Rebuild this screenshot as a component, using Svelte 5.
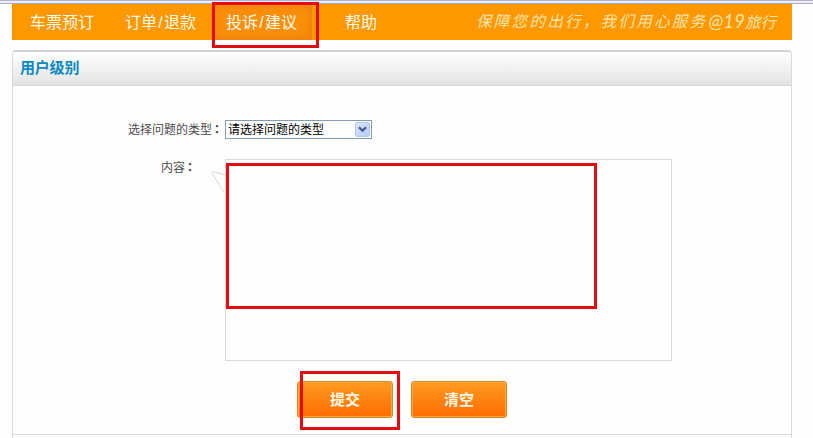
<script>
  const nav = [['车票预订'], ['订单', '退款'], ['投诉', '建议'], ['帮助']];
  const active = 2;
</script>

<div class="page">
  <div class="rule"></div>
  <nav>
    {#each nav as words, i}
      <a class="n{i}" class:active={i === active}>{words[0]}{#if words[1]}<span class="slash">/</span>{words[1]}{/if}{#if i === active}<i class="mark"></i>{/if}</a>
    {/each}
    <div class="slogan"><span>保障您的出行，我们用心服务</span><span class="brand"><b>@19</b>旅行</span></div>
  </nav>

  <section>
    <header>用户级别</header>
    <div class="body">
      <div class="row type">
        <label for="kind">选择问题的类型<span class="colon">：</span></label>
        <div class="select" id="kind">
          <span>请选择问题的类型</span>
          <div class="arrow">
            <svg width="9" height="7" viewBox="0 0 9 7"><path d="M1 1.2 4.5 4.7 8 1.2" fill="none" stroke="#44598c" stroke-width="2.3" /></svg>
          </div>
        </div>
      </div>
      <div class="row content">
        <label for="text">内容<span class="colon">：</span></label>
        <div class="area" id="text">
          <svg class="tail" width="16" height="26" viewBox="0 0 16 26"><path d="M15 5.5 1.5 1.5Q.3 2 1 3.5L13 22" fill="none" stroke="#d6d6d6" /></svg>
          <i class="mark"></i>
        </div>
      </div>
      <div class="buttons">
        <div class="btn">提交<i class="mark"></i></div>
        <div class="btn">清空</div>
      </div>
    </div>
  </section>
</div>

<style>
  :global(body) { background: #fff; }
  .page {
    width: 813px; height: 438px; overflow: hidden; box-sizing: border-box;
    display: flex; flex-direction: column; background: #fefefe;
    font-family: "Liberation Sans", "Noto Sans CJK SC", sans-serif;
    font-size: 12px; color: #4c4c4c;
  }
  .rule { height: 4px; flex: none; background: linear-gradient(#b3b2ca 0 1px, #eeeef8 1px 3px, #a8a9c6 3px); }
  nav { height: 36px; flex: none; margin: 0 21px 0 12px; display: flex; background: #fd9800; color: #fffaf0; font-size: 16px; line-height: 38px; }
  nav a { position: relative; box-sizing: border-box; white-space: nowrap; }
  .slash { display: inline-block; width: 7px; text-align: center; }
  .n0 { width: 97px; padding-left: 18px; }
  .n1 { width: 103px; padding-left: 16px; }
  .n2 { width: 100px; padding-left: 14px; }
  .n3 { width: 121px; padding-left: 33px; }
  .active { background: #fb8f0a; box-shadow: inset 0 0 10px 1px #e77d10; }
  .mark { position: absolute; box-sizing: border-box; border: 3px solid #e60b10; }
  nav .mark { left: 0; top: -2px; width: 107px; height: 46px; z-index: 1; }
  .slogan {
    margin-left: 43px; display: flex; gap: 1px; line-height: 33px; white-space: nowrap;
    font-family: "Noto Sans CJK SC", sans-serif; font-size: 15.5px; font-weight: 400; font-style: italic; letter-spacing: 2.3px; color: #ffe3ae;
  }
  .brand { letter-spacing: 0; }
  .brand b { font-family: Lato, sans-serif; font-weight: 400; font-size: 19px; }
  section { margin: 10px 21px 0 12px; flex: 1; box-sizing: border-box; border: 1px solid #d9d9d9; border-top: 2px solid #d2d2d2; border-bottom: 0; border-radius: 4px 4px 0 0; display: flex; flex-direction: column; }
  header { height: 34px; flex: none; box-sizing: border-box; border-bottom: 1px solid #d9d9d9; background: linear-gradient(#fff, #e3e3e3); padding-left: 7px; line-height: 31px; font-size: 15px; font-weight: bold; color: #0c88c2; border-radius: 3px 3px 0 0; letter-spacing: -.2px; }
  .body { height: 349px; flex: none; box-sizing: border-box; padding-top: 34px; border-bottom: 1px solid #d9d9d9; }
  .row { display: flex; }
  label { box-sizing: border-box; width: 212px; flex: none; white-space: nowrap; line-height: 17px; }
  .type label { padding-left: 115px; }
  .content label { padding-left: 148px; line-height: 16px; }
  .colon { font-family: "Noto Sans CJK TC", sans-serif; font-weight: bold; margin-left: -1px; }
  .select { width: 147px; height: 19px; box-sizing: border-box; border: 1px solid #7f9db9; background: #fff; color: #000; display: flex; justify-content: space-between; padding: 1px 1px 1px 2px; line-height: 16px; }
  .arrow { width: 15px; height: 15px; box-sizing: border-box; border-radius: 2px; border: 1px solid #b4c8f6; background: linear-gradient(135deg, #dce7ff, #b4caf8); display: flex; align-items: center; justify-content: center; }
  .content { margin-top: 20px; }
  .area { position: relative; width: 447px; height: 202px; box-sizing: border-box; border: 1px solid #d9d9d9; }
  .tail { position: absolute; left: -15px; top: 10px; }
  .area .mark { left: 0; top: 3px; width: 371px; height: 146px; }
  .buttons { display: flex; gap: 18px; margin: 20px 0 0 284px; }
  .btn { position: relative; width: 96px; height: 37px; box-sizing: border-box; border: 1px solid #d98a22; border-radius: 3px; background: linear-gradient(#ff9a22, #ff6c00); box-shadow: inset 0 0 0 1px #ffa43c; color: #fff8e6; font-size: 15px; font-weight: bold; line-height: 35px; text-align: center; }
  .btn .mark { left: 2px; top: -11px; width: 100px; height: 59px; }
</style>
